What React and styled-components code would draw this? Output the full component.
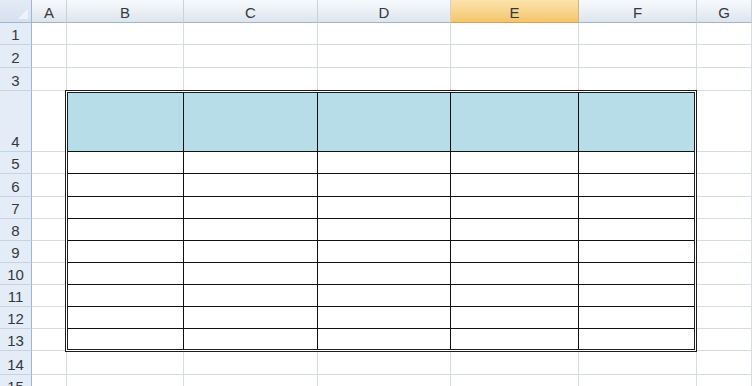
import React from "react";
import styled, { createGlobalStyle, css } from "styled-components";

const Global = createGlobalStyle`
  html, body { margin: 0; padding: 0; background: #fff; }
  body { width: 752px; height: 386px; overflow: hidden; }
  * { box-sizing: border-box; }
`;

const COLS = [
  { key: "A", w: 35 },
  { key: "B", w: 117 },
  { key: "C", w: 134 },
  { key: "D", w: 133 },
  { key: "E", w: 128, selected: true },
  { key: "F", w: 118 },
  { key: "G", w: 55 },
];
const ROW_H = [22, 23, 23, 61, 22, 23, 22, 22, 22, 22, 22, 22, 22, 24, 22];

const TABLE_COLS = [116, 134, 133, 128, 115];
const TABLE_ROWS = [59, 22, 23, 22, 22, 22, 22, 22, 22, 20];

const Sheet = styled.div`
  display: grid;
  grid-template-columns: 32px ${COLS.map((c) => c.w + "px").join(" ")};
  grid-template-rows: 23px ${ROW_H.map((h) => h + "px").join(" ")};
  width: 752px;
  height: 386px;
  overflow: hidden;
  font-family: "Liberation Sans", Arial, sans-serif;
  font-size: 15px;
  color: #34383e;
`;

const Corner = styled.div`
  background: linear-gradient(#e3ebf6, #d6e1f0);
  border-right: 1px solid #9eb6ce;
  border-bottom: 1px solid #9eb6ce;
  display: flex;
  align-items: flex-end;
  justify-content: flex-end;
  padding: 0 3px 3px 0;
`;

const ColHead = styled.div`
  display: flex;
  align-items: center;
  justify-content: center;
  padding-top: 3px;
  border-right: 1px solid #c6d2df;
  border-bottom: 1px solid #9eb6ce;
  background: linear-gradient(#f7f9fc 0%, #eaeff5 55%, #dde4ec 100%);
  ${(p) =>
    p.$selected &&
    css`
      background: linear-gradient(#fbe3ad 0%, #f8d38b 55%, #f4c46a 100%);
      border-right-color: #e2b25b;
      border-bottom-color: #d9a44b;
    `}
`;

const RowHead = styled.div`
  display: flex;
  align-items: flex-end;
  justify-content: center;
  padding-bottom: 1px;
  background: #e4ecf7;
  border-right: 1px solid #9eb6ce;
  border-bottom: 1px solid #c5d3e3;
`;

const Cell = styled.div`
  border-right: 1px solid #d6dbe3;
  border-bottom: 1px solid #d6dbe3;
  background: #fff;
`;

const Table = styled.div`
  grid-column: 3 / 8;
  grid-row: 5 / 15;
  margin: -1px 0 -1px -2px;
  border: 3px double #1e1e1e;
  background: #fff;
  display: grid;
  grid-template-columns: ${TABLE_COLS.map((w) => w + "px").join(" ")};
  grid-template-rows: ${TABLE_ROWS.map((h) => h + "px").join(" ")};
`;

const TCell = styled.div`
  background: ${(p) => (p.$head ? "#b7dee8" : "#fff")};
  border-right: ${(p) => (p.$lastCol ? "none" : "1px solid #111")};
  border-bottom: ${(p) => (p.$lastRow ? "none" : "1px solid #111")};
`;

const CornerMark = () => (
  <svg width="10" height="10" viewBox="0 0 10 10">
    <defs>
      <linearGradient id="cm" x1="0" y1="0" x2="1" y2="1">
        <stop offset="0" stopColor="#f6f9fd" />
        <stop offset="1" stopColor="#e9f0f8" />
      </linearGradient>
    </defs>
    <polygon points="10,0 10,10 0,10" fill="url(#cm)" />
  </svg>
);

export default function App() {
  const inTable = (r, c) => r >= 4 && r <= 13 && c >= 1 && c <= 5;
  const cells = [];
  ROW_H.forEach((_, ri) => {
    const r = ri + 1;
    cells.push(
      <RowHead key={`rh${r}`} style={{ gridRow: r + 1, gridColumn: 1 }}>
        {r}
      </RowHead>
    );
    COLS.forEach((col, ci) => {
      if (inTable(r, ci)) return;
      cells.push(
        <Cell key={`c${r}-${ci}`} style={{ gridRow: r + 1, gridColumn: ci + 2 }} />
      );
    });
  });

  const tcells = [];
  TABLE_ROWS.forEach((_, ri) => {
    TABLE_COLS.forEach((__, ci) => {
      tcells.push(
        <TCell
          key={`t${ri}-${ci}`}
          $head={ri === 0}
          $lastCol={ci === TABLE_COLS.length - 1}
          $lastRow={ri === TABLE_ROWS.length - 1}
        />
      );
    });
  });

  return (
    <>
      <Global />
      <Sheet>
        <Corner>
          <CornerMark />
        </Corner>
        {COLS.map((c) => (
          <ColHead key={c.key} $selected={c.selected}>
            {c.key}
          </ColHead>
        ))}
        {cells}
        <Table>{tcells}</Table>
      </Sheet>
    </>
  );
}
